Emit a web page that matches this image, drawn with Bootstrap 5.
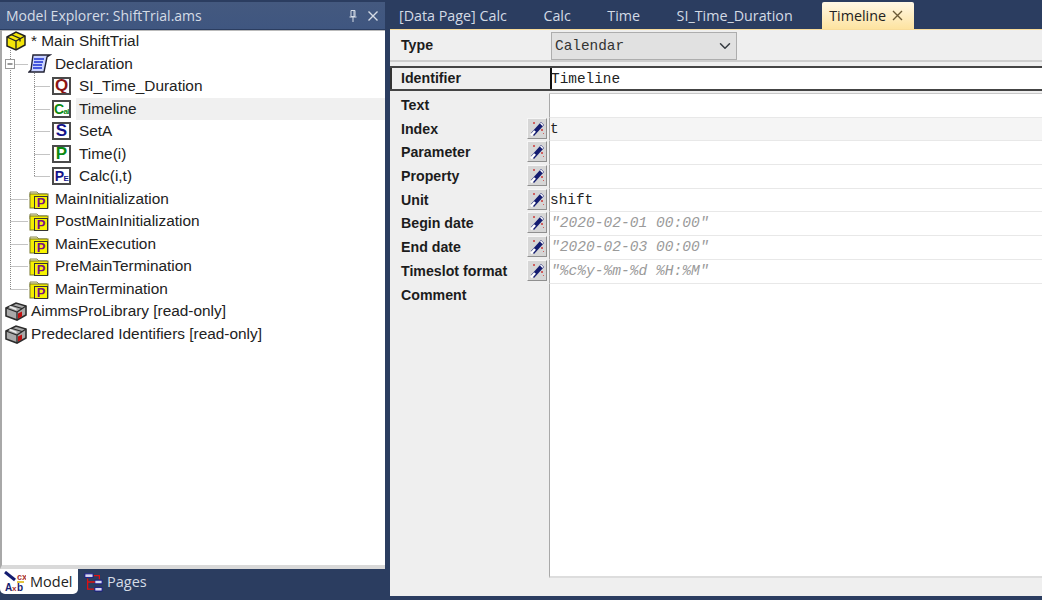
<!DOCTYPE html>
<html lang="en"><head><meta charset="utf-8"><title>Model Explorer</title>
<link href="https://cdn.jsdelivr.net/npm/bootstrap@5.3.0/dist/css/bootstrap.min.css" rel="stylesheet">
<script src="https://cdn.jsdelivr.net/npm/bootstrap@5.3.0/dist/js/bootstrap.bundle.min.js"></script>
<style>
html,body{height:600px;overflow:hidden}
body{background:#2b3d60;font-family:"Liberation Sans",Arial,sans-serif;color:#222;padding-top:1px}
.shell{height:599px}
.side{width:385px;flex:none}
.titlebar{height:27px;background:linear-gradient(#44597f,#3f5680);color:#d5dce6;font:14px "Open Sans",sans-serif;padding:0 6px;margin-top:1px;line-height:27px;flex:none}
.titlebar svg{display:block}
.treebox{background:#fff;border-left:2px solid #a8a8a8;border-bottom:4px solid #d9d9d9;box-shadow:inset 0 1px 0 #bbb;height:539px;position:relative;margin-top:1px;flex:none;font-size:15.4px}
.lines{position:absolute;left:0;top:0;pointer-events:none}
.trow{height:22.5px;line-height:22px;white-space:nowrap}
.d0{padding-left:2px}.d1{padding-left:26px}.d2{padding-left:50px}
.tlabel{padding-left:3px;flex:1;height:100%}
.trow.hov .tlabel{background:#f0f0f0}
.ico{width:24px;height:20px;flex:none;display:block}
.leaf{width:19px;height:18px;border:2px solid #4a4a4a;background:#fff;flex:none;margin-right:5px;font-weight:700;font-size:17px;line-height:14px;text-align:center;overflow:hidden;white-space:nowrap}
.leaf small{font-size:8px;font-weight:700}
.leaf.tight{font-size:14px;letter-spacing:-.6px}
.cq{color:#8d1414}.cg{color:#0a8a12}.cn{color:#12128a}
.bot{height:30px}
.mtab{width:78px;height:25px;background:#fff;color:#222;border-radius:0 0 5px 5px;font:14.5px "Open Sans",sans-serif;line-height:25px}
.ptab{height:25px;color:#d5dce6;font:14.5px "Open Sans",sans-serif;line-height:25px;padding-left:6px}
.main{margin-left:5px;flex:1;min-width:0;height:595px}
.tabrow{height:27px;padding-left:9px;gap:36.5px;color:#d3dae5;font:14.3px "Open Sans",sans-serif;line-height:27px;flex:none;margin-top:1px}
.acttab{background:linear-gradient(#fff8e6,#fde3a0);color:#222;margin-left:-7px;padding:0 7px;width:92px;border-radius:2px 2px 0 0}
.panel{background:#efefef;flex:1;border-top:1px solid #f8dc9a;min-height:0}
.typerow{height:32px;border-bottom:2px solid #cdcdcd;padding-top:2px;flex:none}
.flabel{width:159px;flex:none;padding-left:11px;font-weight:700;font-size:14.2px;color:#1c1c1c;padding-right:1px}
.typerow .flabel{line-height:26px}
.typesel.form-select{width:186px;height:28px;margin-left:2px;border-radius:0;border:1px solid #adadad;background-color:#e1e1e1;background-position:right 3px center;font:14.4px/22px "Liberation Mono",monospace;color:#333;padding:2px 3px}
.val{flex:1;font:14.4px/22px "Liberation Mono",monospace;color:#222;background:#fff;min-width:0;border-left:1px solid #a9a9a9;white-space:nowrap}
.idrow{height:25px;margin-top:4px;border-top:2px solid #444;border-bottom:2px solid #444}
.idrow .flabel{border-left:2px solid #333;padding-left:9px;width:160px;line-height:21px}
.idrow .val{border-left:2px solid #111;text-indent:-1px;line-height:22px}
.frow{height:23.7px;line-height:22px}
.frow .flabel{padding-right:2px}
.frow .val{border-bottom:1px solid #e8e8e8}
.frow.first{margin-top:3px}
.frow.first .val{box-shadow:0 -1px 0 #c8c8c8}
.frow.alt .val{background:#f5f5f5}
.val.ghost{color:#9a9a9a;font-style:italic;line-height:23px;font-size:14.6px;padding-left:1px}
.wbtn{width:20px;height:21px;background:#d6d6d6;border:1px solid;border-color:#f6f6f6 #8f8f8f #8f8f8f #f6f6f6;padding:0;display:block;flex:none;border-radius:0}
.wbtn svg{display:block;margin:1px}
.fill{flex:1;background:#fff;border-left:1px solid #a9a9a9;border-bottom:2px solid #ddd;margin-left:159px}
.foot{height:18px;flex:none}
</style></head>
<body>
<svg width="0" height="0" class="d-none"><defs>
<symbol id="folder" viewBox="0 0 24 20"><path d="M2 3h7l2 2h8v3H2z" fill="#f7f2b0" stroke="#8a8a5a"/><rect x="2" y="5" width="18" height="14" fill="#f5ee00" stroke="#77772a"/><rect x="6.500" y="7.500" width="13" height="12" fill="#f8f400" stroke="#333"/><text x="13" y="18" text-anchor="middle" font-family="Liberation Sans" font-weight="700" font-size="13" fill="#7a0f86">P</text></symbol>
<symbol id="grey" viewBox="0 0 24 20"><path d="M2 7l10-5 10 3v9l-9 5-11-4z" fill="#a9a9a9" stroke="#2c2c2c" stroke-width="1.600"/><path d="M2 7l11 4 9-6M13 11v8M8 4.500l10 3" fill="none" stroke="#2c2c2c" stroke-width="1.300"/><path d="M5.500 5.500l7 3" stroke="#eee" stroke-width="1.600"/><path d="M14 12.500l4-2v5l-4 2z" fill="#c01010"/></symbol>
<symbol id="wand" viewBox="0 0 16 17"><path d="M2 13l3 3L15 5l-3-3z" fill="#141c70"/><path d="M2 15.500l4-4.500" stroke="#fff" stroke-width="2.500"/><path d="M11.500 3l2.500 2.500" stroke="#fff" stroke-width="1.500"/><rect x="4" y="2" width="2" height="2" fill="#d06060"/><rect x="12" y="9" width="2" height="2" fill="#d06060"/><rect x="14" y="13" width="1" height="1" fill="#d06060"/></symbol>
</defs></svg>
<div class="shell d-flex">
 <aside class="side d-flex flex-column">
  <div class="titlebar d-flex align-items-center justify-content-between">
   <span>Model Explorer: ShiftTrial.ams</span>
   <span class="d-flex align-items-center gap-2">
    <svg width="12" height="14" viewBox="0 0 12 14"><path d="M4 1.500h4v6H4zM2.500 8h7M6 8v5M7 2v5" fill="none" stroke="#d5dce6"/></svg>
    <svg width="12" height="12" viewBox="0 0 12 12"><path d="M1.500 1.500l9 9M10.500 1.500l-9 9" stroke="#d5dce6" stroke-width="1.400"/></svg>
   </span>
  </div>
  <div class="treebox">
   <svg class="lines" width="80" height="300"><g stroke="#888" stroke-dasharray="1 1" fill="none"><path d="M8.500 20v239M8.500 34.500h17M32.500 43v103M32.500 56.500h16M32.500 79.500h16M32.500 101.500h16M32.500 124.500h16M32.500 146.500h16M8.500 169.500h17M8.500 191.500h17M8.500 214.500h17M8.500 236.500h17M8.500 259.500h17"/></g><rect x="3.500" y="29.500" width="9" height="9" fill="#fff" stroke="#999"/><path d="M5.500 34h5" stroke="#333"/></svg>
   <div class="position-relative">
    <div class="trow d-flex align-items-center d0"><svg class="ico" viewBox="0 0 24 20"><path d="M3 6l9-5 9 4v9l-9 5-9-4z" fill="#f4e60a" stroke="#222" stroke-width="1.500"/><path d="M3 6l9 4 9-5M12 10v9M7 3.500l9 4v3" fill="none" stroke="#222" stroke-width="1.300"/></svg><span class="tlabel">* Main ShiftTrial</span></div>
    <div class="trow d-flex align-items-center d1"><svg class="ico" viewBox="0 0 24 20"><path d="M5 1h17l-3 2-3 15H1l2-2z" fill="#c9d2ff" stroke="#223" stroke-width="1.400"/><path d="M6 5h10M6 8h9M5 11h9M5 14h9" stroke="#1a2fd0" stroke-width="1.500"/></svg><span class="tlabel">Declaration</span></div>
    <div class="trow d-flex align-items-center d2"><span class="leaf cq">Q</span><span class="tlabel">SI_Time_Duration</span></div>
    <div class="trow hov d-flex align-items-center d2"><span class="leaf tight cg">C<small>al</small></span><span class="tlabel">Timeline</span></div>
    <div class="trow d-flex align-items-center d2"><span class="leaf cn">S</span><span class="tlabel">SetA</span></div>
    <div class="trow d-flex align-items-center d2"><span class="leaf cg">P</span><span class="tlabel">Time(i)</span></div>
    <div class="trow d-flex align-items-center d2"><span class="leaf tight cn">P<small>E</small></span><span class="tlabel">Calc(i,t)</span></div>
    <div class="trow d-flex align-items-center d1"><svg class="ico"><use href="#folder"/></svg><span class="tlabel">MainInitialization</span></div>
    <div class="trow d-flex align-items-center d1"><svg class="ico"><use href="#folder"/></svg><span class="tlabel">PostMainInitialization</span></div>
    <div class="trow d-flex align-items-center d1"><svg class="ico"><use href="#folder"/></svg><span class="tlabel">MainExecution</span></div>
    <div class="trow d-flex align-items-center d1"><svg class="ico"><use href="#folder"/></svg><span class="tlabel">PreMainTermination</span></div>
    <div class="trow d-flex align-items-center d1"><svg class="ico"><use href="#folder"/></svg><span class="tlabel">MainTermination</span></div>
    <div class="trow d-flex align-items-center d0"><svg class="ico"><use href="#grey"/></svg><span class="tlabel">AimmsProLibrary [read-only]</span></div>
    <div class="trow d-flex align-items-center d0"><svg class="ico"><use href="#grey"/></svg><span class="tlabel">Predeclared Identifiers [read-only]</span></div>
   </div>
  </div>
  <div class="bot d-flex">
   <div class="mtab d-flex align-items-center ps-1">
    <svg width="22" height="22" viewBox="0 0 22 22" class="flex-shrink-0"><path d="M1 1l10 8" stroke="#141c70" stroke-width="3"/><text x="13" y="9" font-family="Liberation Sans" font-weight="700" font-size="9" fill="#a33">cx</text><text x="1" y="20" font-family="Liberation Sans" font-weight="700" font-size="10" fill="#141c70">A</text><text x="8" y="20" font-family="Liberation Sans" font-weight="700" font-size="8" fill="#a33">x</text><text x="13" y="20" font-family="Liberation Sans" font-weight="700" font-size="10" fill="#141c70">b</text><path d="M13 11h7" stroke="#d8b000" stroke-width="1.500"/></svg>
    <span class="ms-1">Model</span>
   </div>
   <div class="ptab d-flex align-items-center">
    <svg width="19" height="22" viewBox="0 0 21 22"><path d="M1 2h9v4H1zM12 9h8v4h-8zM12 17h8v4h-8z" fill="#d8d8f0" stroke="#14148a"/><path d="M11 4h6v4M12 11H4V7M4 11v8h7" fill="none" stroke="#e01010" stroke-width="1.400"/></svg>
    <span class="ms-1">Pages</span>
   </div>
  </div>
 </aside>
 <main class="main d-flex flex-column">
  <div class="tabrow d-flex">
   <span>[Data Page] Calc</span><span>Calc</span><span>Time</span><span>SI_Time_Duration</span>
   <span class="acttab d-flex align-items-center justify-content-between"><span>Timeline</span><svg width="11" height="11" viewBox="0 0 11 11" class="me-1"><path d="M1 1l9 9M10 1l-9 9" stroke="#6b5a36" stroke-width="1.400"/></svg></span>
  </div>
  <div class="panel d-flex flex-column">
   <div class="typerow d-flex align-items-start">
    <div class="flabel">Type</div>
    <select class="form-select typesel"><option>Calendar</option></select>
   </div>
   <div class="idrow d-flex"><div class="flabel">Identifier</div><div class="val">Timeline</div></div>
   <div class="frow first d-flex"><div class="flabel">Text</div><div class="val"></div></div>
   <div class="frow alt d-flex"><div class="flabel d-flex justify-content-between">Index<button class="wbtn btn"><svg width="16" height="17"><use href="#wand"/></svg></button></div><div class="val">t</div></div>
   <div class="frow d-flex"><div class="flabel d-flex justify-content-between">Parameter<button class="wbtn btn"><svg width="16" height="17"><use href="#wand"/></svg></button></div><div class="val"></div></div>
   <div class="frow d-flex"><div class="flabel d-flex justify-content-between">Property<button class="wbtn btn"><svg width="16" height="17"><use href="#wand"/></svg></button></div><div class="val"></div></div>
   <div class="frow d-flex"><div class="flabel d-flex justify-content-between">Unit<button class="wbtn btn"><svg width="16" height="17"><use href="#wand"/></svg></button></div><div class="val">shift</div></div>
   <div class="frow d-flex"><div class="flabel d-flex justify-content-between">Begin date<button class="wbtn btn"><svg width="16" height="17"><use href="#wand"/></svg></button></div><div class="val ghost">"2020-02-01 00:00"</div></div>
   <div class="frow d-flex"><div class="flabel d-flex justify-content-between">End date<button class="wbtn btn"><svg width="16" height="17"><use href="#wand"/></svg></button></div><div class="val ghost">"2020-02-03 00:00"</div></div>
   <div class="frow d-flex"><div class="flabel d-flex justify-content-between">Timeslot format<button class="wbtn btn"><svg width="16" height="17"><use href="#wand"/></svg></button></div><div class="val ghost">"%c%y-%m-%d %H:%M"</div></div>
   <div class="frow d-flex"><div class="flabel">Comment</div><div class="val border-bottom-0"></div></div>
   <div class="fill"></div>
   <div class="foot"></div>
  </div>
 </main>
</div>
</body></html>
